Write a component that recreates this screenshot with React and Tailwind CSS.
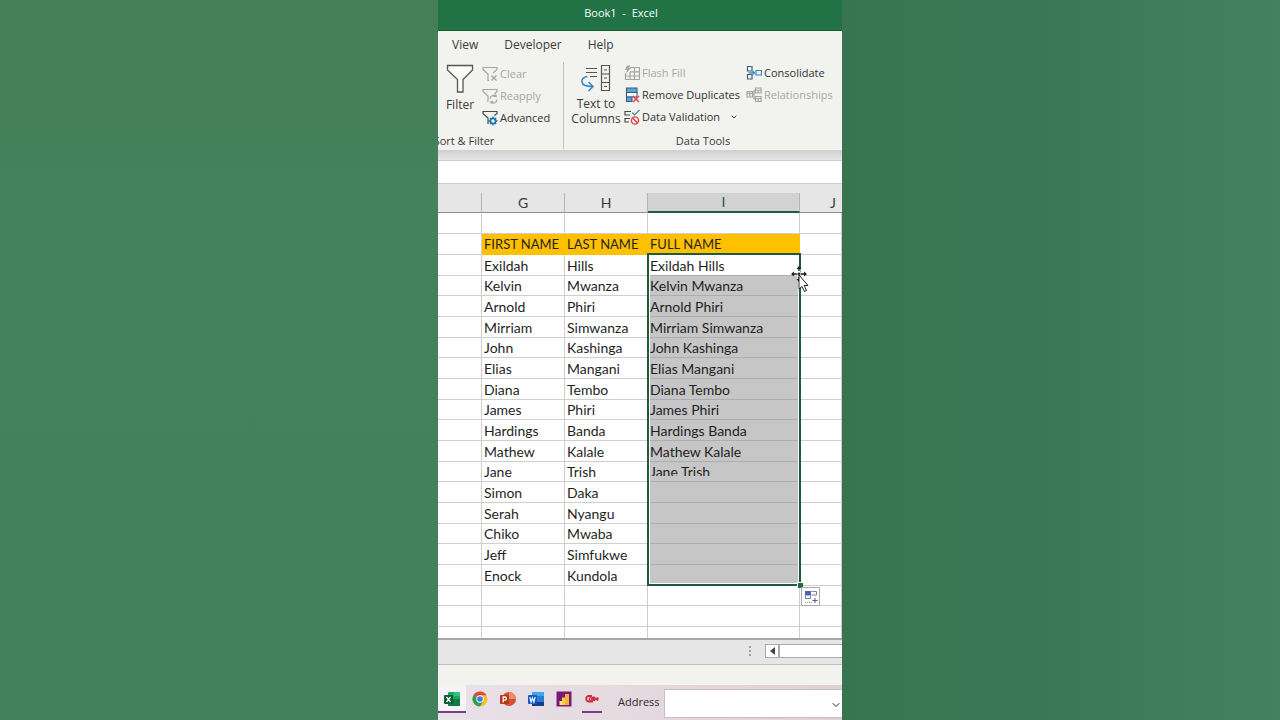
import React from "react";
import { ChevronDown } from "lucide-react";

const people = [
  ["Exildah", "Hills", "Exildah Hills"],
  ["Kelvin", "Mwanza", "Kelvin Mwanza"],
  ["Arnold", "Phiri", "Arnold Phiri"],
  ["Mirriam", "Simwanza", "Mirriam Simwanza"],
  ["John", "Kashinga", "John Kashinga"],
  ["Elias", "Mangani", "Elias Mangani"],
  ["Diana", "Tembo", "Diana Tembo"],
  ["James", "Phiri", "James Phiri"],
  ["Hardings", "Banda", "Hardings Banda"],
  ["Mathew", "Kalale", "Mathew Kalale"],
  ["Jane", "Trish", "Jane Trish"],
  ["Simon", "Daka", ""],
  ["Serah", "Nyangu", ""],
  ["Chiko", "Mwaba", ""],
  ["Jeff", "Simfukwe", ""],
  ["Enock", "Kundola", ""],
];

// the fill animation has only drawn the top part of this row
const HALF_FILLED_ROW = 10;

// every third row is a pixel shorter
const rowHeight = (n) => (n > 0 && n % 3 === 0 ? "h-5" : "h-[21px]");

const FilterIcon = () => (
  <svg width="28" height="30" viewBox="0 0 28 30" fill="#fbfbf9" stroke="#555" strokeWidth="1.3">
    <path d="M1.5 2.5h25V7L17 16.5V29h-5.500V16.500L1.500 7z" />
  </svg>
);

const ClearIcon = () => (
  <svg width="16" height="16" viewBox="0 0 16 16" className="shrink-0" fill="none" stroke="#a5a5a3" strokeWidth="1.2">
    <path d="M7 14.500H6V8L1 3.500v-2h14v2L11 7" />
    <path d="M9.500 9.500l5 5M14.500 9.500l-5 5" strokeWidth="1.4" />
  </svg>
);

const ReapplyIcon = () => (
  <svg width="16" height="16" viewBox="0 0 16 16" className="shrink-0" fill="none" stroke="#a5a5a3" strokeWidth="1.2">
    <path d="M6 14V8L1 3.500v-2h14v2L12.500 6" />
    <path d="M8 11a3.500 3.500 0 0 1 6-2.500V6.500M14 8.500h-2.500M15 11.500a3.500 3.500 0 0 1-6 2.500v1.500M9 13.500h2.500" />
  </svg>
);

const AdvancedIcon = () => (
  <svg width="16" height="16" viewBox="0 0 16 16" className="shrink-0" fill="none" stroke="#4a4a4a" strokeWidth="1.2">
    <path d="M6 14V8L1 3.500v-2h14v2L12.500 5.500" />
    <circle cx="11" cy="11" r="2.6" stroke="#1e78b4" strokeWidth="1.8" />
    <path d="M11 6.500v2M11 13.500v2M6.500 11h2M13.500 11h2M7.900 7.900l1.300 1.300M12.800 12.800l1.300 1.300M14.100 7.900l-1.300 1.300M9.200 12.800l-1.300 1.300" stroke="#1e78b4" strokeWidth="1.4" />
  </svg>
);

const TextToColumnsIcon = () => (
  <svg width="30" height="30" viewBox="0 0 30 30" fill="none" stroke="#555" strokeWidth="1.2">
    <path d="M5 6.500h11M5 10.500h11M9 14.500h7" />
    <path d="M20.500 3.500h8v25h-8zM20.500 12h8M20.500 20.500h8M23 8h3M23 16h3M23 24.500h3" />
    <path d="M6.500 14.500C2 15 .5 17.500 1 20c.6 3.500 4 4.500 10 4.500M7.500 20l4.500 4.500L7.500 29" stroke="#3a8bc2" strokeWidth="1.6" />
  </svg>
);

const FlashFillIcon = () => (
  <svg width="16" height="16" viewBox="0 0 16 16" className="shrink-0" fill="none" stroke="#a5a5a3" strokeWidth="1.2">
    <path d="M6 2.500h9.500v12H1.500V8M1.500 11h14M6 6.800h9.500M6 7v7.500M10.500 2.500v12" />
    <path d="M3 .5h3.500L5 3h2L2 8.500 3 5H1z" fill="#a5a5a3" stroke="none" />
  </svg>
);

const RemoveDuplicatesIcon = () => (
  <svg width="16" height="16" viewBox="0 0 16 16" className="shrink-0" fill="none" stroke="#3f5f78" strokeWidth="1.1">
    <path d="M2.500 1H13v4.500H2.500z" fill="#56a5dc" />
    <path d="M2.500 5.500H13v4.500H2.500z" fill="#f4f7f9" />
    <path d="M2.500 10H8v4.500H2.500z" fill="#56a5dc" />
    <path d="M9 9l6 6M15 9l-6 6" stroke="#e0444c" strokeWidth="1.5" />
  </svg>
);

const DataValidationIcon = () => (
  <svg width="16" height="16" viewBox="0 0 16 16" className="shrink-0" fill="none" stroke="#4a4a4a" strokeWidth="1.2">
    <path d="M7 2.500H1v3.500h5M6 9.500H1V13h4" />
    <path d="M8 3.500L10.500 6 15.500 1" stroke="#4d9187" />
    <circle cx="11" cy="11.500" r="3.6" stroke="#e0444c" strokeWidth="1.4" />
    <path d="M8.500 9l5 5" stroke="#e0444c" strokeWidth="1.4" />
  </svg>
);

const ConsolidateIcon = () => (
  <svg width="16" height="16" viewBox="0 0 16 16" className="shrink-0" fill="none" stroke="#45617a" strokeWidth="1.2">
    <path d="M1.500 1.500h4.500v4.500H1.500zM1.500 9.500h4.500v4.500H1.500z" />
    <path d="M10 5.500h5.500v4.500H10z" stroke="#2f86c4" />
    <path d="M2.500 7.800h6M6.500 5.800l2 2-2 2" stroke="#2f86c4" />
  </svg>
);

const RelationshipsIcon = () => (
  <svg width="16" height="16" viewBox="0 0 16 16" className="shrink-0" fill="none" stroke="#a5a5a3" strokeWidth="1.2">
    <path d="M1 4.500h5.500v5.500H1zM1 6.500h5.500M9.500 1H15v5H9.500zM9.500 3H15M9.500 9.500H15v5H9.500zM9.500 11.500H15M3.700 4.500v5.500M12.200 3v3M12.200 11.500v3M6.500 7H8M8 3.500v8.500M8 3.500h1.500M8 12h1.500" />
  </svg>
);

const AutoFillIcon = () => (
  <svg width="14" height="14" viewBox="0 0 14 14" fill="none">
    <path d="M1 1h6v4.500H1z" fill="#4a66a8" />
    <path d="M7.500 1.500h5v3.500h-5M1.500 5.500v3h5v-3" stroke="#7484ad" />
    <path d="M1 12.500h7" stroke="#999" strokeDasharray="1 1" />
    <path d="M11 8v5M8.500 10.500h5" stroke="#555d7c" />
  </svg>
);

const MoveCursor = () => (
  <svg width="18" height="28" viewBox="0 0 18 28">
    <path d="M2 8h12M8 2v12" stroke="#fff" strokeWidth="3" />
    <path d="M8 0l2.500 3h-5zM8 16l2.500-3h-5zM0 8l3-2.500v5zM16 8l-3-2.500v5z" fill="#16201c" />
    <path d="M8 2v3M2 8h4M10 8h4M8 11v3M6.500 8h3M8 6.500v3" stroke="#16201c" strokeWidth="1.4" />
    <path d="M8 9v14l3-2.500 2.500 5 2-1-2.300-5H17z" fill="#fff" stroke="#222" strokeWidth="1" />
  </svg>
);

const ExcelLogo = () => (
  <svg width="16" height="16" viewBox="0 0 16 16">
    <rect x="4" y="1" width="12" height="14" rx="1" fill="#21a366" />
    <path d="M10 1h5a1 1 0 0 1 1 1v3h-6z" fill="#33c481" />
    <path d="M4 8h12v6a1 1 0 0 1-1 1H5a1 1 0 0 1-1-1z" fill="#107c41" />
    <rect y="4" width="9" height="9" rx="1" fill="#0b5c30" />
    <path d="M2.500 6l4 5M6.500 6l-4 5" stroke="#fff" strokeWidth="1.3" />
  </svg>
);

const ChromeLogo = () => (
  <svg width="16" height="16" viewBox="0 0 16 16">
    <circle cx="8" cy="8" r="7.5" fill="#f6c026" />
    <path d="M8 8L1.500 4.250A7.500 7.500 0 0 1 14.500 4.250H8z" fill="#dd4a3c" />
    <path d="M8 8L1.500 4.250A7.500 7.500 0 0 0 8 15.500l3.250-5.600z" fill="#2f9e51" />
    <circle cx="8" cy="8" r="3.7" fill="#fff" />
    <circle cx="8" cy="8" r="2.8" fill="#3b7de0" />
  </svg>
);

const PowerPointLogo = () => (
  <svg width="16" height="16" viewBox="0 0 16 16">
    <circle cx="9" cy="8" r="7" fill="#d5502f" />
    <path d="M9 1a7 7 0 0 1 7 7H9z" fill="#f08b6c" />
    <rect y="4" width="9" height="9" rx="1" fill="#b5371c" />
    <path d="M3.200 11.500V6h1.600a1.500 1.500 0 0 1 0 3.200H3.200" fill="none" stroke="#fff" strokeWidth="1.3" />
  </svg>
);

const WordLogo = () => (
  <svg width="16" height="16" viewBox="0 0 16 16">
    <rect x="4" y="1" width="12" height="14" rx="1" fill="#2b7cd3" />
    <path d="M4 1h12v4H4z" fill="#41a5ee" />
    <path d="M4 11h12v4H4z" fill="#103f91" />
    <rect y="4" width="9" height="9" rx="1" fill="#185abd" />
    <path d="M1.800 6l1.300 5L4.500 7l1.400 4 1.300-5" fill="none" stroke="#fff" strokeWidth="1.1" />
  </svg>
);

const PowerBiLogo = () => (
  <svg width="16" height="16" viewBox="0 0 16 16">
    <path d="M.5.5h15v15H.5z" fill="#7a1877" />
    <path d="M3.500 10H7v4H3.500z" fill="#f8e08a" />
    <path d="M6 6.500h4V14H6z" fill="#f5cf55" />
    <path d="M9 3h4v11H9z" fill="#edb62c" />
  </svg>
);

const RecorderLogo = () => (
  <svg width="16" height="16" viewBox="0 0 16 16" fill="none" stroke="#cf2f3c">
    <path d="M8 5H4.500a2.800 2.800 0 0 0 0 5.500H9" strokeWidth="1.8" />
    <circle cx="6.500" cy="8" r="1.3" strokeWidth="1.2" />
    <path d="M8.500 6h2.500v3.500H8.500zM11.500 7.500l2.500-1v3l-2.500-1z" fill="#cf2f3c" />
  </svg>
);

const apps = [
  { name: "Excel", Logo: ExcelLogo, active: true },
  { name: "Chrome", Logo: ChromeLogo },
  { name: "PowerPoint", Logo: PowerPointLogo },
  { name: "Word", Logo: WordLogo },
  { name: "Power BI", Logo: PowerBiLogo },
  { name: "Recorder", Logo: RecorderLogo, running: true },
];

// Small ribbon command: icon + label
const Command = ({ icon, label, disabled, menu }) => (
  <button
    disabled={disabled}
    className="flex h-[22px] items-center gap-0.5 text-[11px] whitespace-nowrap text-[#333] disabled:text-[#a8a8a6]"
  >
    {icon}
    {label}
    {menu && <ChevronDown size={8} strokeWidth={3} className="ml-2" />}
  </button>
);

const Ribbon = () => (
  <div className="flex h-[119px] shrink-0 flex-col bg-[#f2f2ee] text-[12px] text-[#3b3b3b]">
    <nav className="flex h-7 shrink-0 items-center gap-[26px] pl-[14px]">
      <button>View</button>
      <button>Developer</button>
      <button>Help</button>
    </nav>

    <div className="flex flex-1">
      {/* Sort & Filter runs on past the left edge of the window */}
      <section className="-ml-[73px] flex w-[198px] shrink-0 flex-col pl-[81px]">
        <div className="flex h-[74px] gap-2 pt-1">
          <button className="flex w-7 flex-col items-center gap-1 leading-4">
            <FilterIcon />
            Filter
          </button>
          <div className="flex flex-col">
            <Command icon={<ClearIcon />} label="Clear" disabled />
            <Command icon={<ReapplyIcon />} label="Reapply" disabled />
            <Command icon={<AdvancedIcon />} label="Advanced" />
          </div>
        </div>
        <h2 className="-ml-[81px] text-center text-[11px] leading-4">Sort &amp; Filter</h2>
      </section>

      <section className="my-[3px] flex flex-1 flex-col border-l border-[#c4c4c2]">
        <div className="flex h-[71px] pl-2">
          <button className="flex w-12 flex-col items-center gap-1 leading-[15px]">
            <TextToColumnsIcon />
            <span>
              Text to
              <br />
              Columns
            </span>
          </button>
          <div className="ml-1 flex w-[122px] shrink-0 flex-col">
            <Command icon={<FlashFillIcon />} label="Flash Fill" disabled />
            <Command icon={<RemoveDuplicatesIcon />} label="Remove Duplicates" />
            <Command icon={<DataValidationIcon />} label="Data Validation" menu />
          </div>
          <div className="flex flex-col">
            <Command icon={<ConsolidateIcon />} label="Consolidate" />
            <Command icon={<RelationshipsIcon />} label="Relationships" disabled />
          </div>
        </div>
        <h2 className="text-center text-[11px] leading-4">Data Tools</h2>
      </section>
    </div>
  </div>
);

const Sheet = () => {
  const line = "border-r border-b border-[#cfcfcf]";
  const columnHead = "border-r border-b border-r-[#b5b5b5] border-b-[#8e8e8e] p-0 font-normal";
  const title = "bg-[#ffc000] p-0 pl-0.5 text-[13px] whitespace-nowrap";

  return (
    <div className="relative min-h-0 flex-1 overflow-hidden bg-white font-['Lato',sans-serif] text-[14px] leading-[19px] text-[#1f1f1f]">
      <table className="w-full table-fixed border-separate border-spacing-0">
        <colgroup>
          <col className="w-11" />
          <col className="w-[83px]" />
          <col className="w-[83px]" />
          <col className="w-[152px]" />
          <col />
        </colgroup>
        <thead className="bg-[#e6e6e6] text-[#3a3a3a]">
          <tr className="h-5">
            <th className={columnHead}></th>
            <th className={columnHead}>G</th>
            <th className={columnHead}>H</th>
            <th className="border-r border-b-2 border-r-[#b5b5b5] border-b-[#1f5a3e] bg-[#d2d2d2] p-0 leading-[18px] font-normal text-[#1f5a3e]">
              I
            </th>
            <th className="border-b border-[#8e8e8e] p-0 pr-1.5 text-right font-normal">J</th>
          </tr>
        </thead>
        <tbody>
          <tr className={rowHeight(0)}>
            <td className={line}></td>
            <td className={line}></td>
            <td className={line}></td>
            <td className={line}></td>
            <td className={line}></td>
          </tr>
          <tr className={rowHeight(1)}>
            <td className={line}></td>
            <td className={title}>FIRST NAME</td>
            <td className={title}>LAST NAME</td>
            <td className={title}>FULL NAME</td>
            <td className={line}></td>
          </tr>
          {people.map(([first, last, full], i) => (
            <tr key={first} className={rowHeight(i + 2)}>
              <td className={line}></td>
              <td className={`${line} p-0 pl-0.5`}>{first}</td>
              <td className={`${line} p-0 pl-0.5`}>{last}</td>
              <td
                className={`border-b border-[#adadad] p-0 pl-0.5 whitespace-nowrap ${i === 0 ? "bg-white" : "bg-[#c6c6c6]"} ${i === HALF_FILLED_ROW ? "align-top" : ""}`}
              >
                <span className={i === HALF_FILLED_ROW ? "block h-[14px] overflow-hidden" : "block"}>{full}</span>
              </td>
              <td className={line}></td>
            </tr>
          ))}
          {[18, 19, 20].map((n) => (
            <tr key={n} className={rowHeight(n)}>
              <td className={line}></td>
              <td className={line}></td>
              <td className={line}></td>
              <td className={line}></td>
              <td className={line}></td>
            </tr>
          ))}
        </tbody>
      </table>

      {/* Selection frame with its fill handle */}
      <div className="absolute top-[60px] left-[209px] h-[333px] w-[154px] border-2 border-[#1f5a3e]">
        <div className="h-full border border-white" />
        <div className="absolute -right-1 -bottom-1 size-[6px] border-t border-l border-white bg-[#1f6b43]" />
      </div>
      <button
        aria-label="Auto Fill Options"
        className="absolute top-[394px] left-[363px] flex size-[19px] items-center justify-center border border-[#ababab] bg-white"
      >
        <AutoFillIcon />
      </button>
      <div className="absolute top-[73px] left-[353px]">
        <MoveCursor />
      </div>
    </div>
  );
};

const Taskbar = () => (
  <div className="flex h-[35px] shrink-0 bg-linear-to-r from-[#e8e2e8] to-[#e0d0d6] text-[11px] text-[#2b2b2b]">
    <div className="flex">
      {apps.map(({ name, Logo, active, running }) => (
        <button
          key={name}
          aria-label={name}
          className={`flex h-7 w-7 justify-center pt-1.5 ${active ? "bg-[#f6f3f7]" : ""}`}
        >
          <span
            className={`flex h-[22px] justify-center ${active ? "w-7 border-b-2 border-[#7a3f82]" : ""} ${running ? "w-5 border-b-2 border-[#7a3f82]" : ""}`}
          >
            <Logo />
          </span>
        </button>
      ))}
    </div>
    <label htmlFor="address" className="ml-3 flex items-center">
      Address
    </label>
    <div className="relative mt-1 mb-0.5 ml-1 flex flex-1">
      <input id="address" className="w-full min-w-0 border border-r-0 border-[#c9bcc2] bg-white px-1" />
      <ChevronDown size={12} className="absolute top-2.5 right-0" />
    </div>
  </div>
);

const App = () => {
  return (
    <div className="flex h-screen justify-center overflow-hidden font-['Open_Sans',sans-serif]">
      <div className="flex-1 bg-linear-to-b from-[#457f57] via-[#44815d] via-30% to-[#43805c]" />

      <main className="flex aspect-[101/180] h-full flex-col overflow-hidden bg-[#e6e6e6]">
        <header className="flex h-[31px] shrink-0 items-center border-b border-[#185a34] bg-[#217346] pb-1 text-[11px] whitespace-pre text-white">
          <h1 className="w-[366px] text-center">Book1  -  Excel</h1>
        </header>
        <Ribbon />

        {/* Formula bar */}
        <div className="h-2.5 shrink-0 bg-linear-to-b from-[#cfcfcf] to-[#e6e6e6]" />
        <input aria-label="Formula bar" className="h-6 shrink-0 border-y border-[#cdcdcd] bg-white px-2" />
        <div className="h-[9px] shrink-0" />

        <Sheet />

        <div className="flex h-[27px] shrink-0 items-center justify-end border-t-2 border-b border-t-[#a6a6a6] border-b-[#c0c0c0] pb-0.5">
          <div className="mr-3.5 flex flex-col gap-0.5">
            <i className="size-0.5 bg-[#a0a0a0]" />
            <i className="size-0.5 bg-[#a0a0a0]" />
            <i className="size-0.5 bg-[#a0a0a0]" />
          </div>
          <button aria-label="Scroll left" className="flex size-[14px] items-center justify-center border border-[#ababab] bg-white">
            <svg width="5" height="8" viewBox="0 0 5 8">
              <path d="M5 0v8L0 4z" fill="#444" />
            </svg>
          </button>
          <div className="h-[14px] w-[63px] border border-r-0 border-[#ababab] bg-white" />
        </div>
        <div className="h-5 shrink-0 bg-[#f2f2ee]" />
        <Taskbar />
      </main>

      <div className="flex-1 bg-linear-to-r from-[#38744f] via-[#3c7856] to-[#44815e]" />
    </div>
  );
};

export default App;
